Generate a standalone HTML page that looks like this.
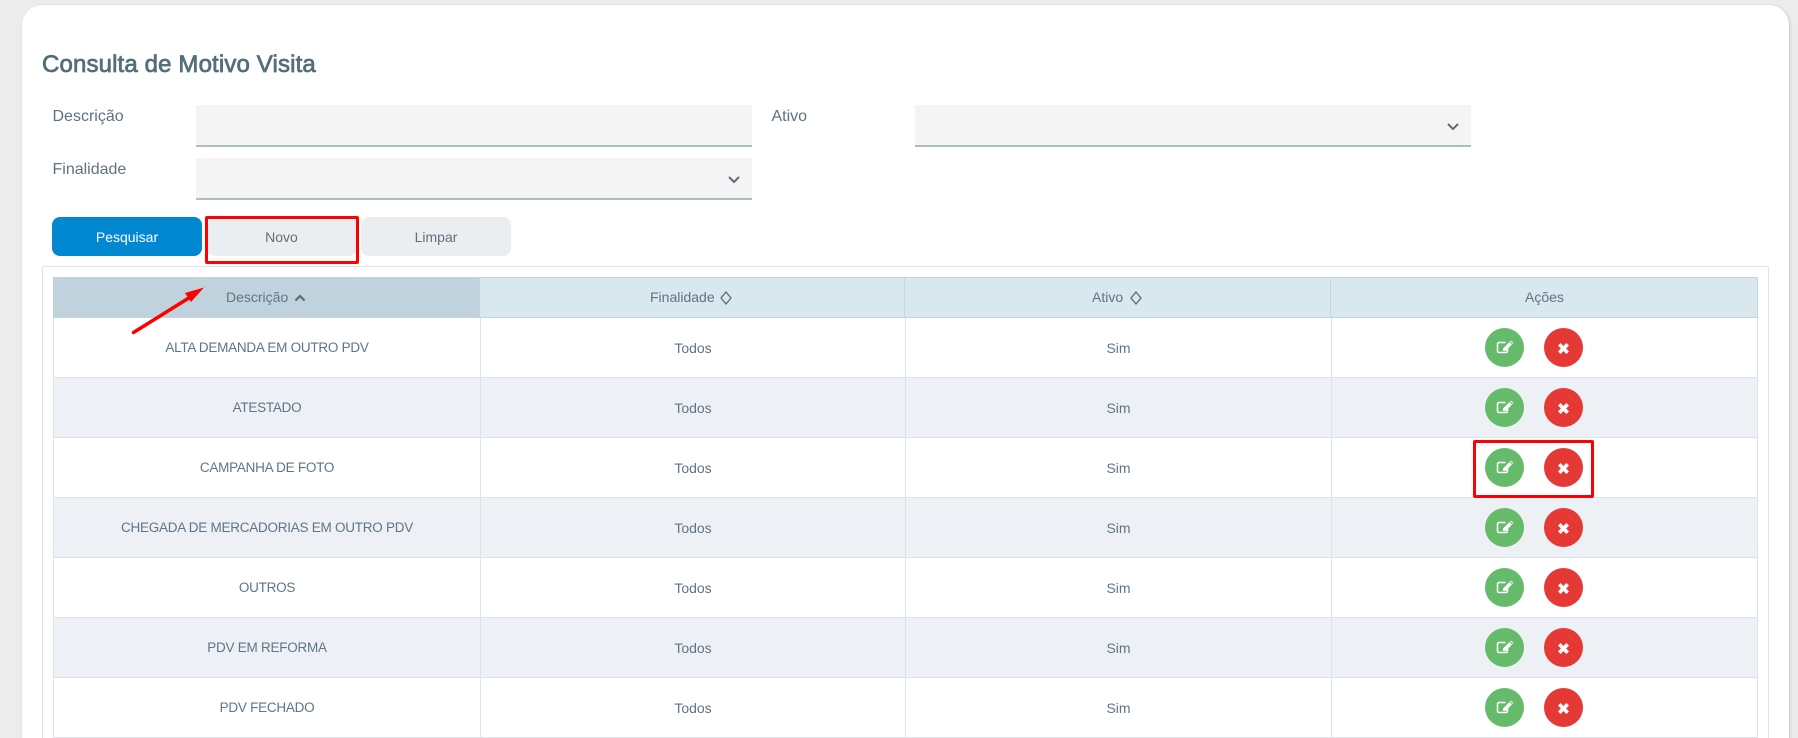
<!DOCTYPE html>
<html lang="pt-BR">
<head>
<meta charset="utf-8">
<title>Consulta de Motivo Visita</title>
<style>
html,body{margin:0;padding:0;width:1798px;height:738px;overflow:hidden;background:#ececec;font-family:"Liberation Sans",sans-serif;color:#5f7486}
div,span,svg{position:absolute;box-sizing:border-box}
#page{left:0;top:0;width:1798px;height:738px;overflow:hidden;background:#ececec}
#card{left:22px;top:5px;width:1767px;height:760px;background:#fff;border-radius:20px;box-shadow:1px 1px 3px rgba(0,0,0,.18)}
#title{left:42px;top:51px;font-size:24px;line-height:28px;font-weight:normal;letter-spacing:.14px;-webkit-text-stroke:.75px #546e7a;color:#546e7a;white-space:nowrap}
.lbl{font-size:16px;line-height:20px;color:#5f7280;white-space:nowrap}
.inp{background:#f4f4f4;border-bottom:2px solid #aebcc3;height:41.500px}
.btn{top:217px;width:150px;height:39px;border-radius:8px;background:#ebeef1;text-align:center;font-size:14px;line-height:41px;color:#5f6f7c}
#wrap{left:42px;top:266px;width:1727px;height:500px;border:1px solid #e0e3e5;border-radius:2px;background:#fff}
.hd{top:277px;height:41px;background:#d9e7ef;border-top:1px solid #c4d5de;border-bottom:1px solid #c4d5de;border-right:1px solid #c4d5de;font-size:14px;line-height:39px}
.row{left:53px;width:1705px;height:60px;background:#fff;border-bottom:1.500px solid #dde3e8;border-left:1.500px solid #dde3e8;border-right:1.500px solid #dde3e8}
.row.alt{background:#edf1f5}
.vl{top:318px;width:1px;height:420px;background:#dde3e8}
.c{height:60px;line-height:60px;font-size:14px;text-align:center;white-space:nowrap;color:#5f7486}
.c1{left:54px;width:426px;font-size:13.500px;letter-spacing:-.25px}
.c2{left:481px;width:424px}
.c3{left:906px;width:425px}
.ht{white-space:nowrap;color:#5f7486}
.rb{width:39px;height:39px;border-radius:50%}
.g{left:1485px;background:#66bb6a}
.r{left:1544px;background:#e53935}
.rb svg{left:0;top:0}
.red{border:3.500px solid #f00;border-radius:2px}
</style>
</head>
<body>
<div id="page">
<div id="card"></div>
<div id="title">Consulta de Motivo Visita</div>

<div class="lbl" style="left:52.500px;top:107px">Descrição</div>
<div class="inp" style="left:196px;top:105px;width:556px"></div>
<div class="lbl" style="left:771.500px;top:107px">Ativo</div>
<div class="inp" style="left:915px;top:105px;width:556px"></div>
<svg style="left:1446px;top:122px" width="14" height="10" viewBox="0 0 14 10"><path d="M2 2l5 5 5-5" fill="none" stroke="#546e7a" stroke-width="2"/></svg>
<div class="lbl" style="left:52.500px;top:160px">Finalidade</div>
<div class="inp" style="left:196px;top:158px;width:556px"></div>
<svg style="left:727px;top:175px" width="14" height="10" viewBox="0 0 14 10"><path d="M2 2l5 5 5-5" fill="none" stroke="#546e7a" stroke-width="2"/></svg>

<div class="btn" style="left:52px;background:#0288d1;color:#fff">Pesquisar</div>
<div class="btn" style="left:206.500px">Novo</div>
<div class="btn" style="left:361px">Limpar</div>
<div class="red" style="left:205px;top:215.500px;width:154px;height:48px"></div>

<div id="wrap"></div>
<div class="hd" style="left:53px;width:427px;background:#c0d3dc"><span class="ht" style="left:173px;top:0">Descrição</span></div>
<svg style="left:294px;top:293px" width="12" height="10" viewBox="0 0 12 10"><path d="M1.500 7.500L6 3l4.500 4.500" fill="none" stroke="#546e7a" stroke-width="2.200"/></svg>
<div class="hd" style="left:480px;width:425px"><span class="ht" style="left:170px;top:0">Finalidade</span></div>
<svg style="left:719px;top:290px" width="14" height="16" viewBox="0 0 14 16"><path d="M7 2l5 6-5 6-5-6z" fill="none" stroke="#546e7a" stroke-width="1.300"/></svg>
<div class="hd" style="left:905px;width:426px"><span class="ht" style="left:187px;top:0">Ativo</span></div>
<svg style="left:1129px;top:290px" width="14" height="16" viewBox="0 0 14 16"><path d="M7 2l5 6-5 6-5-6z" fill="none" stroke="#546e7a" stroke-width="1.300"/></svg>
<div class="hd" style="left:1331px;width:427px"><span class="ht" style="left:194px;top:0">Ações</span></div>

<div class="row" style="top:318px"></div>
<div class="row alt" style="top:378px"></div>
<div class="row" style="top:438px"></div>
<div class="row alt" style="top:498px"></div>
<div class="row" style="top:558px"></div>
<div class="row alt" style="top:618px"></div>
<div class="row" style="top:678px"></div>
<div class="vl" style="left:480px"></div>
<div class="vl" style="left:905px"></div>
<div class="vl" style="left:1331px"></div>

<div class="c c1" style="top:318px">ALTA DEMANDA EM OUTRO PDV</div><div class="c c2" style="top:318px">Todos</div><div class="c c3" style="top:318px">Sim</div>
<div class="c c1" style="top:378px">ATESTADO</div><div class="c c2" style="top:378px">Todos</div><div class="c c3" style="top:378px">Sim</div>
<div class="c c1" style="top:438px">CAMPANHA DE FOTO</div><div class="c c2" style="top:438px">Todos</div><div class="c c3" style="top:438px">Sim</div>
<div class="c c1" style="top:498px">CHEGADA DE MERCADORIAS EM OUTRO PDV</div><div class="c c2" style="top:498px">Todos</div><div class="c c3" style="top:498px">Sim</div>
<div class="c c1" style="top:558px">OUTROS</div><div class="c c2" style="top:558px">Todos</div><div class="c c3" style="top:558px">Sim</div>
<div class="c c1" style="top:618px">PDV EM REFORMA</div><div class="c c2" style="top:618px">Todos</div><div class="c c3" style="top:618px">Sim</div>
<div class="c c1" style="top:678px">PDV FECHADO</div><div class="c c2" style="top:678px">Todos</div><div class="c c3" style="top:678px">Sim</div>

<svg width="0" height="0" style="left:0;top:0">
<defs>
<g id="e"><path d="M22.500 20v3a1.500 1.500 0 0 1-1.500 1.500h-7a1.500 1.500 0 0 1-1.500-1.500v-7a1.500 1.500 0 0 1 1.500-1.500h6.500" fill="none" stroke="#fff" stroke-width="1.500"/><path d="M18 23v-2.500L24.500 14l2.500 2.500L20.500 23z M25.200 13.300l.8-.8 2.500 2.500-.8.8z" fill="#fff"/></g>
<g id="x"><path d="M15.300 16.300l8.400 8.400M23.700 16.300l-8.400 8.400" stroke="#fff" stroke-width="3.600"/></g>
</defs>
</svg>

<div class="rb g" style="top:328px"><svg width="39" height="39"><use href="#e"/></svg></div><div class="rb r" style="top:328px"><svg width="39" height="39"><use href="#x"/></svg></div>
<div class="rb g" style="top:388px"><svg width="39" height="39"><use href="#e"/></svg></div><div class="rb r" style="top:388px"><svg width="39" height="39"><use href="#x"/></svg></div>
<div class="rb g" style="top:448px"><svg width="39" height="39"><use href="#e"/></svg></div><div class="rb r" style="top:448px"><svg width="39" height="39"><use href="#x"/></svg></div>
<div class="rb g" style="top:508px"><svg width="39" height="39"><use href="#e"/></svg></div><div class="rb r" style="top:508px"><svg width="39" height="39"><use href="#x"/></svg></div>
<div class="rb g" style="top:568px"><svg width="39" height="39"><use href="#e"/></svg></div><div class="rb r" style="top:568px"><svg width="39" height="39"><use href="#x"/></svg></div>
<div class="rb g" style="top:628px"><svg width="39" height="39"><use href="#e"/></svg></div><div class="rb r" style="top:628px"><svg width="39" height="39"><use href="#x"/></svg></div>
<div class="rb g" style="top:688px"><svg width="39" height="39"><use href="#e"/></svg></div><div class="rb r" style="top:688px"><svg width="39" height="39"><use href="#x"/></svg></div>

<div class="red" style="left:1473px;top:440px;width:121px;height:57.500px"></div>

<svg style="left:125px;top:280px" width="90" height="60" viewBox="125 280 90 60"><path d="M133.500 332.500L192 296" stroke="#f00" stroke-width="3.500" stroke-linecap="round" fill="none"/><path d="M204 287.500l-19 5.500 6 9z" fill="#f00"/></svg>
</div>
</body>
</html>
